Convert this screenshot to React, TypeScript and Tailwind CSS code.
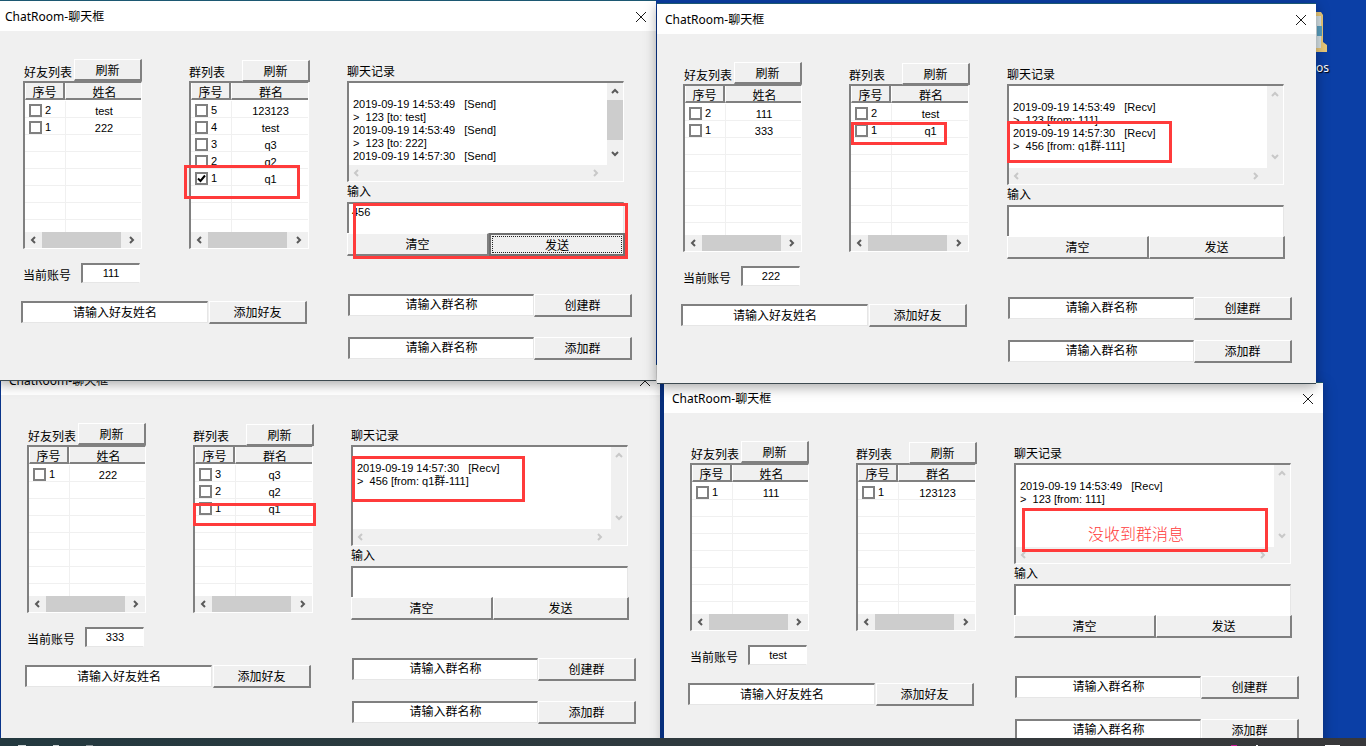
import React from "react";

type Row = [string, string, boolean?];
type Dlg = {
  friends: Row[];
  groups: Row[];
  account: string;
  log: string[];
  thumb?: boolean;
  input?: string;
  focusSend?: boolean;
};

function Chevron({ dir, off }: { dir: "l" | "r" | "u" | "d"; off?: boolean }) {
  const d = { l: "M5 1 2 4l3 3", r: "M3 1l3 3-3 3", u: "M1 5l3-3 3 3", d: "M1 3l3 3 3-3" }[dir];
  return (
    <svg width="8" height="8" viewBox="0 0 8 8" fill="none" stroke={off ? "#c8c8c8" : "#5a5a5a"} strokeWidth="2">
      <path d={d} />
    </svg>
  );
}

function Btn({ label, className, focused }: { label: string; className: string; focused?: boolean }) {
  if (focused) {
    return (
      <div className={`bg-[#f0f0f0] border-2 border-[#707070] p-px ${className}`}>
        <div className="h-full border border-dotted border-[#222222] flex items-center justify-center leading-none pt-[2px]">{label}</div>
      </div>
    );
  }
  return (
    <div className={`bg-[#f0f0f0] border-t border-l border-white border-r-2 border-b-2 border-r-[#808080] border-b-[#808080] flex items-center justify-center leading-none pt-[2px] ${className}`}>
      {label}
    </div>
  );
}

function Field({ label, className }: { label: string; className: string }) {
  return (
    <div className={`bg-white border-t-2 border-l-2 border-[#808080] border-r border-b border-r-[#e6e6e6] border-b-[#e6e6e6] text-center overflow-hidden ${className}`}>
      {label}
    </div>
  );
}

function Check({ on }: { on?: boolean }) {
  return (
    <div className="w-[13px] h-[13px] border-2 border-[#808080] bg-white flex items-center justify-center shrink-0">
      {on && (
        <svg width="9" height="9" viewBox="0 0 9 9" fill="none" stroke="#000" strokeWidth="2">
          <path d="M1 4.5 3.5 7 8 1.5" />
        </svg>
      )}
    </div>
  );
}

function ListTable({ head, rows, className }: { head: string; rows: Row[]; className: string }) {
  const blanks = Math.max(0, 8 - rows.length);
  return (
    <div className={`h-[168px] border-t-2 border-l-2 border-[#808080] border-r border-b border-r-white border-b-white bg-white flex flex-col ${className}`}>
      <div className="flex h-[17px] bg-[#f0f0f0] shrink-0 overflow-hidden leading-[20px]">
        <div className="w-[40px] text-center border-r-2 border-b-2 border-[#808080] border-l border-l-white">序号</div>
        <div className="flex-1 text-center pl-[2px] border-b-2 border-[#808080] border-l border-l-white">{head}</div>
      </div>
      <div className="h-[132px] pt-px overflow-hidden text-[11px]">
        {rows.map((r, i) => (
          <div key={i} className="flex h-[17px] border-b border-[#f0f0f0]">
            <div className="w-[41px] border-r border-[#f0f0f0] flex items-center pl-[4px] pt-[3px] gap-[3px]">
              <Check on={r[2]} />
              <span>{r[0]}</span>
            </div>
            <div className="flex-1 text-center pt-[3px] pl-px leading-[14px]">{r[1]}</div>
          </div>
        ))}
        {Array.from({ length: blanks }).map((_, i) => (
          <div key={i} className="flex h-[17px] border-b border-[#f0f0f0]">
            <div className="w-[41px] border-r border-[#f0f0f0]" />
          </div>
        ))}
      </div>
      <div className="h-[16px] bg-[#f0f0f0] flex items-center shrink-0">
        <div className="w-[17px] flex justify-center"><Chevron dir="l" /></div>
        <div className="w-[79px] h-full bg-[#cdcdcd]" />
        <div className="flex-1 flex justify-center"><Chevron dir="r" /></div>
      </div>
    </div>
  );
}

function Dialog({ d, pos }: { d: Dlg; pos: string }) {
  const off = !d.thumb;
  return (
    <div className={`absolute w-[659px] h-[381px] bg-[#f0f0f0] border-t border-t-[#1c5872] border-b border-b-[#3d4a50] shadow-[0_3px_12px_rgba(0,0,0,0.35)] text-[12px] text-black ${pos}`}>
      <div className="h-[30px] bg-white flex items-center justify-between pl-[8px] pr-[10px] pt-[1px] font-['Noto_Sans','Noto_Sans_CJK_SC',sans-serif]">
        <span>ChatRoom-聊天框</span>
        <svg width="10" height="10" viewBox="0 0 10 10" stroke="#1a1a1a" strokeWidth="1">
          <path d="M0 0l10 10M10 0 0 10" />
        </svg>
      </div>
      <div className="flex pt-[28px] pl-[24px]">
        <div className="w-[326px] shrink-0">
          <div className="flex ml-[2px]">
            <div className="w-[119px]">
              <div className="flex h-[22px]">
                <span className="w-[51px] pl-px pt-[6px] leading-[17px]">好友列表</span>
                <Btn label="刷新" className="w-[68px] h-[22px]" />
              </div>
              <ListTable head="姓名" rows={d.friends} className="w-[119px]" />
            </div>
            <div className="w-[121px] ml-[47px]">
              <div className="flex h-[22px]">
                <span className="w-[53px] pt-[6px] leading-[17px]">群列表</span>
                <Btn label="刷新" className="w-[68px] h-[22px] mt-px" />
              </div>
              <ListTable head="群名" rows={d.groups} className="w-[120px]" />
            </div>
          </div>
          <div className="flex items-center h-[20px] mt-[14px] ml-[2px]">
            <span className="w-[58px] pt-[6px]">当前账号</span>
            <div className="w-[59px] h-[20px] bg-white border-t-2 border-l-2 border-[#808080] border-r border-b border-r-white border-b-[#e6e6e6] text-center text-[11px] leading-[16px]">{d.account}</div>
          </div>
          <div className="flex mt-[18px]">
            <Field label="请输入好友姓名" className="w-[187px] h-[22px] leading-[20px]" />
            <Btn label="添加好友" className="w-[98px] h-[23px] ml-px" />
          </div>
        </div>
        <div className="w-[286px] shrink-0">
          <div className="h-[22px] pt-[5px] leading-[17px]">聊天记录</div>
          <div className="w-[277px] h-[101px] border-t-2 border-l-2 border-[#808080] border-r border-b border-r-white border-b-white bg-[#f0f0f0] flex flex-col">
            <div className="flex h-[82px]">
              <div className="w-[258px] bg-white pl-[4px] pt-[2px] text-[11px] leading-[13px] whitespace-pre overflow-hidden">
                {"\n" + d.log.join("\n")}
              </div>
              <div className="flex-1 flex flex-col items-center">
                <div className="h-[17px] flex items-center"><Chevron dir="u" off={off} /></div>
                <div className={`w-full h-[40px] ${d.thumb ? "bg-[#cdcdcd]" : ""}`} />
                <div className="flex-1 flex items-center"><Chevron dir="d" off={off} /></div>
              </div>
            </div>
            <div className="h-[16px] flex items-center justify-between pl-[4px] pr-[24px]">
              <Chevron dir="l" off />
              <Chevron dir="r" off />
            </div>
          </div>
          <div className="h-[20px] pt-[1px] leading-[19px]">输入</div>
          <div className="w-[277px] h-[31px] bg-white border-t-2 border-l-2 border-[#808080] border-r border-r-[#e6e6e6] pl-[3px] pt-px text-[11px] leading-[14px]">
            {d.input ?? ""}
          </div>
          <div className="flex w-[278px]">
            <Btn label="清空" className="w-[142px] h-[23px]" />
            <Btn label="发送" className="flex-1 h-[23px]" focused={d.focusSend} />
          </div>
          <div className="flex mt-[38px] ml-px">
            <Field label="请输入群名称" className="w-[186px] h-[22px] leading-[19px]" />
            <Btn label="创建群" className="w-[98px] h-[23px]" />
          </div>
          <div className="flex mt-[20px] ml-px">
            <Field label="请输入群名称" className="w-[186px] h-[22px] leading-[19px]" />
            <Btn label="添加群" className="w-[98px] h-[23px]" />
          </div>
        </div>
      </div>
    </div>
  );
}

function Mark({ pos, children }: { pos: string; children?: React.ReactNode }) {
  return (
    <div className={`absolute border-[3px] border-[#ff3b3b] flex items-center justify-center ${pos}`}>{children}</div>
  );
}

const L = (t: string, k: string) => `2019-09-19 ${t}   [${k}]`;

const w1: Dlg = {
  friends: [["2", "test"], ["1", "222"]],
  groups: [["5", "123123"], ["4", "test"], ["3", "q3"], ["2", "q2"], ["1", "q1", true]],
  account: "111",
  log: [L("14:53:49", "Send"), ">  123 [to: test]", L("14:53:49", "Send"), ">  123 [to: 222]", L("14:57:30", "Send")],
  thumb: true,
  input: "456",
  focusSend: true,
};
const w2: Dlg = {
  friends: [["2", "111"], ["1", "333"]],
  groups: [["2", "test"], ["1", "q1"]],
  account: "222",
  log: [L("14:53:49", "Recv"), ">  123 [from: 111]", L("14:57:30", "Recv"), ">  456 [from: q1群-111]"],
};
const w3: Dlg = {
  friends: [["1", "222"]],
  groups: [["3", "q3"], ["2", "q2"], ["1", "q1"]],
  account: "333",
  log: [L("14:57:30", "Recv"), ">  456 [from: q1群-111]"],
};
const w4: Dlg = {
  friends: [["1", "111"]],
  groups: [["1", "123123"]],
  account: "test",
  log: [L("14:53:49", "Recv"), ">  123 [from: 111]"],
};

export default function App() {
  return (
    <div className="relative w-[1366px] h-[746px] overflow-hidden bg-[#0b3fa6] font-['Liberation_Sans','Noto_Sans_CJK_SC',sans-serif]">
      <svg className="absolute left-[1300px] top-[12px]" width="27" height="40" viewBox="0 0 27 40">
        <path d="M0 0h21l2 3v27l4 3v7H0z" fill="#e9c878" />
        <path d="M4 4h17v32H4z" fill="#d6e2e6" />
        <path d="M17 14h5v10h-5z" fill="#5aa0c0" />
      </svg>
      <span className="absolute left-[1316px] top-[61px] text-[12px] text-white font-['Noto_Sans',sans-serif] [text-shadow:1px_1px_1px_#000] leading-[14px]">os</span>

      <Dialog d={w3} pos="left-[1px] top-[364px] shadow-[-1px_0_0_#0a5f94]" />
      <Dialog d={w1} pos="left-[-3px] top-0" />
      <Dialog d={w4} pos="left-[664px] top-[382px] shadow-[-4px_0_0_#0a5f94]" />
      <Dialog d={w2} pos="left-[657px] top-[3px]" />

      <Mark pos="left-[184px] top-[165px] w-[116px] h-[34px]" />
      <Mark pos="left-[353px] top-[203px] w-[275px] h-[56px]" />
      <Mark pos="left-[1007px] top-[121px] w-[165px] h-[42px]" />
      <Mark pos="left-[851px] top-[122px] w-[96px] h-[23px]" />
      <Mark pos="left-[352px] top-[456px] w-[173px] h-[46px]" />
      <Mark pos="left-[193px] top-[503px] w-[123px] h-[23px]" />
      <Mark pos="left-[1022px] top-[508px] w-[246px] h-[44px]">
        <span className="text-[16px] text-[#ff3b3b] pt-[6px] pr-[18px] font-['Noto_Sans_CJK_SC',sans-serif] font-light">没收到群消息</span>
      </Mark>

      <div className="absolute left-0 right-0 bottom-0 h-[8px] bg-gradient-to-r from-[#23393f] via-[#2f3a3e] to-[#38383a]">
        <div className="absolute left-[18px] top-[7px] w-[8px] h-px bg-[#cfd6d8]" />
        <div className="absolute left-[53px] top-[7px] w-[6px] h-px bg-[#cfd6d8]" />
        <div className="absolute left-[86px] top-[7px] w-[7px] h-px bg-[#8a9498]" />
        <div className="absolute left-[1231px] top-[7px] w-[6px] h-px bg-[#d01a9a]" />
        <div className="absolute left-[1256px] top-[7px] w-[2px] h-px bg-white" />
        <div className="absolute left-[1325px] top-[7px] w-[15px] h-px bg-white" />
      </div>
    </div>
  );
}
